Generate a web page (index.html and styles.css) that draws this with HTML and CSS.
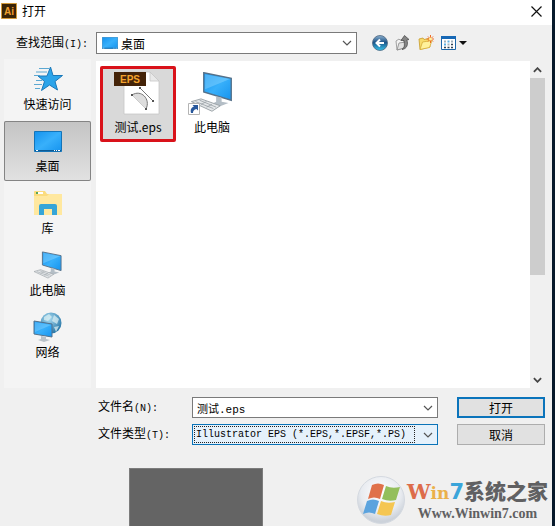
FILE: index.html
```
<!DOCTYPE html>
<html lang="zh-CN">
<head>
  <meta charset="utf-8">
  <title>打开</title>
  <link rel="stylesheet" href="styles.css">
</head>
<body>
  <!-- shared symbols -->
  <svg class="defs" width="0" height="0">
    <defs>
      <linearGradient id="blue" x1="0" y1="0" x2="1" y2="1">
        <stop offset="0" stop-color="#1492ee"/>
        <stop offset=".5" stop-color="#38b0fb"/>
        <stop offset="1" stop-color="#1593ee"/>
      </linearGradient>
      <radialGradient id="globe" cx=".4" cy=".3" r=".7">
        <stop offset="0" stop-color="#a9dcf2"/>
        <stop offset="1" stop-color="#2a78a8"/>
      </radialGradient>
      <radialGradient id="ball" cx=".5" cy=".35" r=".6">
        <stop offset="0" stop-color="#ffffff"/>
        <stop offset=".7" stop-color="#e8ebf0"/>
        <stop offset="1" stop-color="#ccd2da"/>
      </radialGradient>
      <linearGradient id="back" x1="0" y1="0" x2="0" y2="1">
        <stop offset="0" stop-color="#8fb2d0"/>
        <stop offset=".45" stop-color="#1c5488"/>
        <stop offset="1" stop-color="#35c3ec"/>
      </linearGradient>
      <symbol id="chevron" viewBox="0 0 10 6">
        <path d="M1 1l4 4 4-4" fill="none" stroke="#555" stroke-width="1.2"/>
      </symbol>
      <symbol id="desktop" viewBox="0 0 28 21">
        <path d="M.5.5h27v20H.5z" fill="url(#blue)" stroke="#1474b8"/>
        <path d="M1 19.500h26" stroke="#0c5a94"/>
        <path d="M2 19.500h2M20 19.500h1M22 19.500h1M24 19.500h2" stroke="#fff"/>
      </symbol>
      <symbol id="pc" viewBox="0 0 32 30">
        <path d="M10 1l20 4v16L10 15z" fill="url(#blue)" stroke="#55718a"/>
        <path d="M11 2l18 3.500L11 13z" fill="#8fd6ff" opacity=".45"/>
        <path d="M19 18l4 1v3l5 1-8 3-5-2 4-2z" fill="#b4bec6"/>
        <path d="M1 22l7-2 14 5-6 4z" fill="#e4e7e9" stroke="#9ca3a8" stroke-width=".7"/>
        <path d="M4 22l13 5M7 21l12 5M8 24l4-2M12 26l4-2" stroke="#9ca3a8" stroke-width=".6"/>
      </symbol>
    </defs>
  </svg>

  <header class="titlebar">
    <svg width="16" height="16" viewBox="0 0 16 16">
      <path d="M.5.5h15v15H.5z" fill="#3a2407" stroke="#d39a3a"/>
      <text x="3" y="12" class="ai">Ai</text>
    </svg>
    <h1>打开</h1>
    <button class="close" aria-label="关闭">
      <svg width="11" height="11" viewBox="0 0 11 11"><path d="M.5.5l10 10M10.500.5l-10 10" stroke="#111" stroke-width="1.2"/></svg>
    </button>
  </header>

  <div class="toolbar">
    <label for="look-in">查找范围<span class="mono">(I):</span></label>
    <div class="combo look-in">
      <svg width="16" height="12"><use href="#desktop"/></svg>
      <select id="look-in"><option>桌面</option></select>
      <svg class="arrow" width="10" height="6"><use href="#chevron"/></svg>
    </div>
    <div class="tools">
      <button aria-label="后退">
        <svg width="16" height="16" viewBox="0 0 16 16">
          <circle cx="8" cy="8" r="7.500" fill="url(#back)" stroke="#4b6680" stroke-width=".8"/>
          <path d="M12 8H5M8 4.500L4.500 8 8 11.500" fill="none" stroke="#fff" stroke-width="2"/>
        </svg>
      </button>
      <button aria-label="向上">
        <svg width="16" height="16" viewBox="0 0 16 16">
          <path d="M1 6l3-2 1 1 4-1v9l-7 2z" fill="#f2f2f2" stroke="#999" stroke-width=".9"/>
          <path d="M2 15l2-7 7-1-2 6z" fill="#e2e2e2" stroke="#888" stroke-width=".8"/>
          <path d="M7 14.500c3-2 2.500-5 2-9H6L9.500.5l4.500 4-2.200.5C13.500 9 12 14 7 14.500z" fill="#858585" stroke="#444" stroke-width=".7"/>
        </svg>
      </button>
      <button aria-label="新建文件夹">
        <svg width="16" height="16" viewBox="0 0 16 16">
          <path d="M1 4l4-1 1 1.500 5-1L12 12l-10 2.500z" fill="#f8dc6c" stroke="#c79b28" stroke-width=".8"/>
          <path d="M2 14.500L4.500 7l9.500-1.500-2.500 7z" fill="#fff19b" stroke="#d4ac38" stroke-width=".8"/>
          <path d="M12.500 0v8M8.500 4h8M10 1.500l5 5M15 1.500l-5 5" stroke="#ef6b25"/>
          <circle cx="12.500" cy="4" r="1.500" fill="#fff3a0"/>
        </svg>
      </button>
      <button aria-label="查看" class="view">
        <svg width="15" height="14" viewBox="0 0 15 14">
          <path d="M.5.5h14v13H.5z" fill="#fff" stroke="#1c66a8"/>
          <path d="M0 0h15v3H0z" fill="#1768b5"/>
          <path d="M3 5.500h2M10 5.500h2M6.500 8.500h2" stroke="#a3b1ba" stroke-width="2"/>
          <path d="M6.500 5.500h2M3 8.500h2" stroke="#5cb0e2" stroke-width="2"/>
          <path d="M10 8.500h2M3 11.500h2M6.500 11.500h2M10 11.500h2" stroke="#345" stroke-width="1.500"/>
        </svg>
        <svg width="8" height="4" viewBox="0 0 8 4"><path d="M0 0h8L4 4z" fill="#111"/></svg>
      </button>
    </div>
  </div>

  <main class="browser">
    <nav class="places">
      <button>
        <svg width="32" height="32" viewBox="0 0 32 32">
          <path d="M18.500 4l2.500 8.500h9.500L23 18.500l2.500 8.500-8-5-8 5.500 3-9L6 13h9z" fill="#2ba4ea" stroke="#1b78b8"/>
          <path d="M7 5.500h10M4 9h11M2 12.500h6M4 17.500h6M2 21.500h8M3 25.500h5" stroke="#4b9fce" stroke-width=".9"/>
        </svg>
        快速访问
      </button>
      <button class="selected">
        <svg width="32" height="32" viewBox="0 0 32 32"><use href="#desktop" x="2" y="6" width="28" height="21"/></svg>
        桌面
      </button>
      <button>
        <svg width="32" height="32" viewBox="0 0 32 32">
          <path d="M2 5q0-1 1-1h10l2 3h14q1 0 1 1v20H2z" fill="#fbdc7e"/>
          <path d="M2 9h13l2-2h13v21H2z" fill="#ffe89f"/>
          <path d="M4 5h7v2H4z" fill="#fff"/>
          <path d="M4 5h2v2H4z" fill="#58a65c"/>
          <path d="M7 28V19q0-2 2-2h14q2 0 2 2v9h-5v-6h-8v6z" fill="#35a5d8"/>
        </svg>
        库
      </button>
      <button>
        <svg width="32" height="32" viewBox="0 0 32 32"><use href="#pc" x="1" y="2" width="30" height="28"/></svg>
        此电脑
      </button>
      <button>
        <svg width="32" height="32" viewBox="0 0 32 32">
          <circle cx="19" cy="12" r="10.500" fill="url(#globe)"/>
          <path d="M12 6l5-3 3 3-4 4-4-1zM22 4l5 4-2 5-5-3zM22 16l5-1-3 6z" fill="#d8eef2" opacity=".75"/>
          <path d="M2 10l18 3v13L2 23z" fill="url(#blue)" stroke="#55718a"/>
          <path d="M3 11l16 3L3 21z" fill="#8fd6ff" opacity=".4"/>
          <path d="M9 25l5 1v2l4 1-6 2-6-2 3-1z" fill="#b9c2c9"/>
        </svg>
        网络
      </button>
    </nav>

    <section class="files">
      <button class="file picked">
        <svg width="48" height="48" viewBox="2 0 48 48">
          <path d="M12 2h26l9 9v33H12z" fill="#fff" stroke="#c6c6c6" stroke-width=".8"/>
          <path d="M38 2v9h9z" fill="#e9e9e9" stroke="#c6c6c6" stroke-width=".8"/>
          <path d="M20 25c9-6 19 4 14 14z" fill="#ddd"/>
          <path d="M20 25c9-6 19 4 14 14M28 18l13 13" fill="none" stroke="#777"/>
          <path d="M20 25l14 14" stroke="#bbb" stroke-width=".7"/>
          <path d="M19 24h2v2h-2zM33 38h2v2h-2zM27 17h2v2h-2zM40 30h2v2h-2z" fill="#555"/>
          <path d="M2 2h32v14H2z" fill="#442308"/>
          <text x="18" y="13" class="eps">EPS</text>
        </svg>
        测试.eps
      </button>
      <button class="file">
        <svg width="48" height="48" viewBox="0 0 48 48">
          <use href="#pc" x="2" y="1" width="44" height="42"/>
          <path d="M.5 33.500h11v11H.5z" fill="#fff" stroke="#b4b4b4"/>
          <path d="M3 43c-1-4 1-6 3-6.500L4.500 35H10v5.500L8.500 39C6 39.500 5 41 5 43z" fill="#28589c"/>
        </svg>
        此电脑
      </button>
    </section>

    <div class="scrollbar">
      <svg width="9" height="6" viewBox="0 0 10 6"><path d="M1 5l4-4 4 4" fill="none" stroke="#444" stroke-width="2"/></svg>
      <div class="track"><div class="thumb"></div></div>
      <svg width="9" height="6" viewBox="0 0 10 6"><path d="M1 1l4 4 4-4" fill="none" stroke="#444" stroke-width="2"/></svg>
    </div>
  </main>

  <form class="fields">
    <label for="name">文件名<span class="mono">(N):</span></label>
    <div class="combo">
      <input type="text" id="name" value="测试.eps">
      <svg class="arrow" width="10" height="6"><use href="#chevron"/></svg>
    </div>
    <button type="button" class="btn primary">打开</button>

    <label for="type">文件类型<span class="mono">(T):</span></label>
    <div class="combo active">
      <select id="type" class="mono"><option>Illustrator EPS (*.EPS,*.EPSF,*.PS)</option></select>
      <svg class="arrow" width="10" height="6"><use href="#chevron"/></svg>
    </div>
    <button type="button" class="btn">取消</button>
  </form>

  <footer>
    <div class="preview"></div>
    <div class="brand">
      <svg width="48" height="48" viewBox="0 0 48 48">
        <circle cx="24" cy="24" r="23.500" fill="url(#ball)" stroke="#d4d9e0"/>
        <path d="M15 9q6-3 12 0l-4 14q-6-3-12 0z" fill="#e0714a"/>
        <path d="M29 10q6 3 14 1l-4 13q-7 2-14-1z" fill="#93bf5c"/>
        <path d="M10 25q6-3 12 0l-4 13q-6-3-12 0z" fill="#5ba3de"/>
        <path d="M24 25q6 3 14 1l-4 13q-7 2-14-1z" fill="#f5c652"/>
      </svg>
      <div class="brand-text">
        <div class="brand-name"><span class="w">W</span><span class="in">in</span><span class="seven">7</span>系统之家</div>
        <div class="brand-url">Www.Winwin7.com</div>
      </div>
    </div>
  </footer>
</body>
</html>
```
FILE: styles.css
```
* {
  box-sizing: border-box;
}
body {
  margin: 0;
  height: 100vh;
  min-height: 500px;
  display: flex;
  flex-direction: column;
  overflow: hidden;
  background: #f0f0f0;
  border-right: 3px solid #06192b;
  color: #000;
  font: 12px/18px "Noto Sans CJK SC", sans-serif;
}
button, input, select {
  font: inherit;
  color: inherit;
  margin: 0;
  padding: 0;
  border: 0;
  background: none;
}
svg {
  display: block;
  flex: none;
}
.defs {
  position: absolute;
}
.mono {
  font-family: "Liberation Mono", monospace;
  font-size: 10px;
}

.titlebar {
  display: flex;
  align-items: center;
  gap: 5px;
  height: 25px;
  padding: 0 10px 3px 1px;
  background: #fff;
}
.titlebar h1 {
  margin: 0;
  font-size: 12px;
  font-weight: normal;
}
.close {
  margin-left: auto;
}
.ai {
  font: bold 10px "Liberation Sans", sans-serif;
  fill: #f0a030;
}

.toolbar {
  display: flex;
  align-items: center;
  height: 36px;
  padding-left: 16px;
}
.toolbar label {
  width: 80px;
}
.combo {
  display: flex;
  align-items: center;
  height: 21px;
  padding: 1px 4px 1px 1px;
  background: #fff;
  border: 1px solid #7a7a7a;
}
.combo select,
.combo input {
  flex: 1;
  min-width: 0;
  height: 17px;
  padding: 0 3px;
  line-height: 15px;
  appearance: none;
  outline: none;
}
.combo input {
  font-family: "Liberation Mono", "Noto Sans CJK SC", monospace;
  font-size: 11px;
}
.combo.look-in {
  flex: 1;
  max-width: 261px;
  height: 22px;
  padding-left: 5px;
}
.combo.active {
  background: #e5f1fb;
  border-color: #0a73b8;
}
.combo.active select {
  padding: 0 1px;
  margin-right: 8px;
  border: 1px dotted #222;
}
.tools {
  display: flex;
  align-items: center;
  gap: 7px;
  padding-left: 15px;
}
.view {
  display: flex;
  align-items: center;
  gap: 3px;
}

.browser {
  display: flex;
  height: 327px;
  padding: 0 7px 0 4px;
}
.places {
  display: flex;
  flex-direction: column;
  gap: 2px;
  width: 87px;
  margin: -2px 5px 0 0;
  background: #f4f4f4;
}
.places button {
  display: flex;
  flex-direction: column;
  align-items: center;
  height: 60px;
  padding-top: 4px;
}
.places .selected {
  background: linear-gradient(#c4c4c4, #e2e2e2);
  border-radius: 2px;
  box-shadow: inset 0 0 0 1px #848484;
}
.files {
  flex: 1;
  display: flex;
  align-items: flex-start;
  padding: 6px 5px;
  background: #fff;
}
.file {
  display: flex;
  flex-direction: column;
  align-items: center;
  width: 74px;
  height: 74px;
  padding-top: 3px;
}
.picked {
  background: #d9d9d9;
  outline: 3px solid #d9121a;
  outline-offset: -2px;
  border-radius: 1px;
}
.eps {
  font: bold 10px "Liberation Sans", sans-serif;
  fill: #f5a32c;
  text-anchor: middle;
}
.scrollbar {
  display: flex;
  flex-direction: column;
  align-items: center;
  width: 15px;
  padding: 6px 0 5px;
}
.track {
  flex: 1;
  width: 100%;
  margin: 5px 0;
}
.thumb {
  height: 67%;
  background: #cdcdcd;
}

.fields {
  display: grid;
  grid-template-columns: 94px 1fr 88px;
  row-gap: 6px;
  align-items: center;
  padding: 9px 7px 0 98px;
}
.fields .combo {
  margin-right: 19px;
}
.btn {
  height: 21px;
  line-height: 17px;
  background: #e1e1e1;
  border: 1px solid #adadad;
}
.primary {
  border: 2px solid #0b74bb;
}

footer {
  flex: 1;
  display: flex;
  justify-content: space-between;
  align-items: flex-start;
  min-height: 0;
  padding: 23px 4px 0 129px;
}
.preview {
  width: 134px;
  height: 100%;
  background: #646464;
  border: 1px solid #7c7c7c;
  border-bottom: 0;
}
.brand {
  display: flex;
  align-items: center;
  gap: 2px;
  padding-top: 8px;
}
.brand-name {
  font-size: 21px;
  font-weight: 900;
  line-height: 24px;
  color: #606062;
  white-space: nowrap;
}
.w, .in, .seven {
  font-family: "DejaVu Serif", serif;
  font-weight: bold;
}
.w {
  color: #dd6c4a;
}
.in {
  font-size: 17px;
  color: #ebb04a;
}
.seven {
  font-family: "DejaVu Sans", sans-serif;
  color: #3aa5da;
}
.brand-url {
  font: bold 14px/18px "Liberation Serif", serif;
  color: #606062;
  text-align: center;
}
```
